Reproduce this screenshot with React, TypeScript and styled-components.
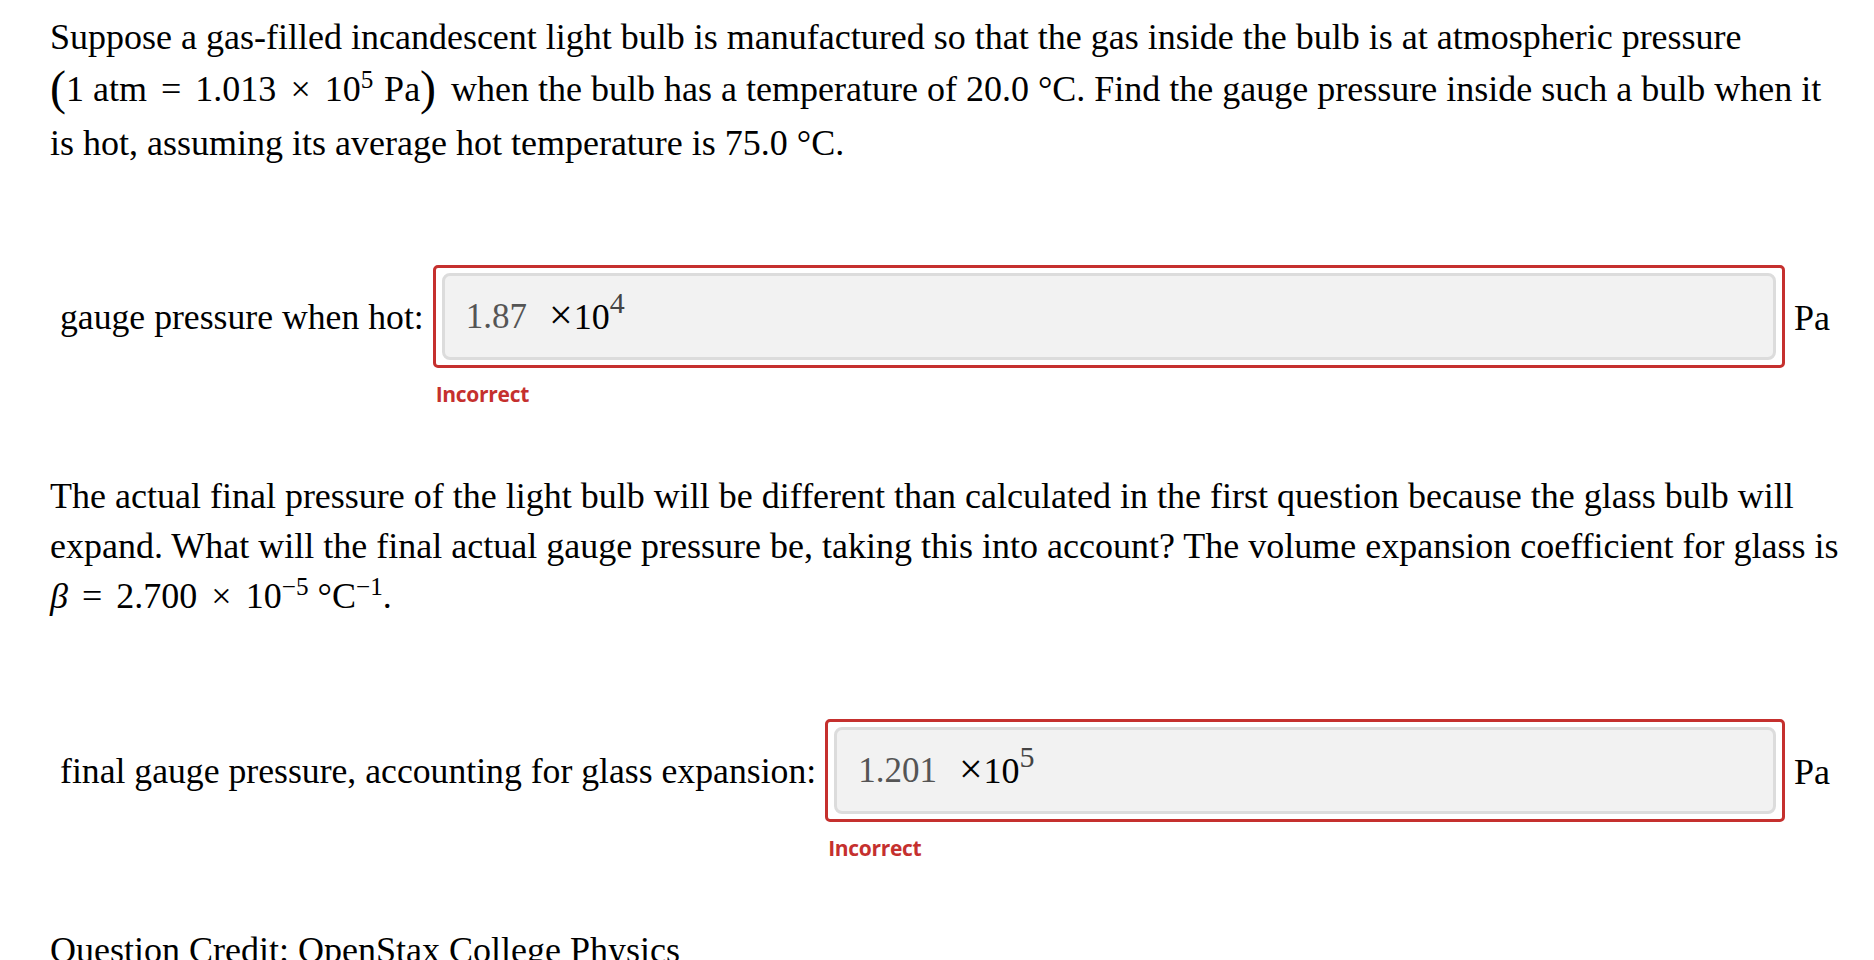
import React from "react";
import styled, { createGlobalStyle } from "styled-components";

const GlobalStyle = createGlobalStyle`
  html, body { margin: 0; padding: 0; background: #ffffff; }
  body {
    font-family: "Liberation Serif", "Times New Roman", serif;
    color: #000000;
  }
`;

const Page = styled.main`
  box-sizing: border-box;
  height: 960px;
  overflow: hidden;
  padding: 12px 30px 0 50px;
  font-size: 36px;
  line-height: 50px;
`;

const Para = styled.p<{ $top?: number }>`
  margin: ${(p) => p.$top ?? 0}px 0 0;
`;

const MathRun = styled.span<{ $after?: number }>`
  white-space: nowrap;
  margin-right: ${(p) => p.$after ?? 0}px;
`;

const MathText = styled.span``;

const Op = styled.span`
  margin: 0 0.39em;
`;

const MathUnit = styled.span`
  margin-left: 0.3em;
`;

const BigParen = styled.span`
  display: inline-block;
  font-size: 48px;
  line-height: 48px;
  vertical-align: -3px;
  padding: 2px 0 6px;
`;

const Sup = styled.sup`
  font-size: 0.7em;
  line-height: 0;
  vertical-align: 0.5em;
`;

const Ital = styled.i`
  font-style: italic;
`;

const QuestionGrid = styled.div<{ $top: number }>`
  display: grid;
  grid-template-columns: auto 1fr auto;
  column-gap: 9px;
  row-gap: 12px;
  margin-top: ${(p) => p.$top}px;
  padding: 0 14px 0 10px;
`;

const Label = styled.label`
  align-self: center;
  white-space: nowrap;
  font-size: 35.7px;
`;

const Frame = styled.div`
  box-sizing: border-box;
  height: 103px;
  border: 3px solid #c5302e;
  border-radius: 5px;
  padding: 5px 6px;
`;

const Field = styled.div`
  box-sizing: border-box;
  height: 100%;
  display: flex;
  align-items: center;
  padding-left: 21px;
  background: #f2f2f2;
  border: 3px solid #dcdcdc;
  border-radius: 8px;
`;

const Value = styled.span`
  font-size: 35px;
  color: #555555;
`;

const Times = styled.span`
  margin-left: 22px;
  color: #000000;
`;

const Cross = styled.span`
  font-size: 42px;
  line-height: 0;
  margin-right: 1px;
`;

const Exp = styled.span`
  display: inline-block;
  font-size: 30px;
  line-height: 0;
  vertical-align: 16px;
  color: #444444;
`;

const Unit = styled.span`
  align-self: center;
  padding-top: 2px;
`;

const Feedback = styled.div`
  grid-column: 2;
  padding-left: 3px;
  font-family: "Open Sans", "Liberation Sans", sans-serif;
  font-weight: 700;
  font-size: 21px;
  letter-spacing: -0.3px;
  line-height: 28px;
  color: #c5302e;
`;

type Q = { label: string; value: string; exp: string; top: number };

const Question: React.FC<Q> = ({ label, value, exp, top }) => (
  <QuestionGrid $top={top}>
    <Label>{label}</Label>
    <Frame>
      <Field>
        <Value>{value}</Value>
        <Times>
          <Cross>×</Cross>10<Exp>{exp}</Exp>
        </Times>
      </Field>
    </Frame>
    <Unit>Pa</Unit>
    <Feedback>Incorrect</Feedback>
  </QuestionGrid>
);

export default function App() {
  return (
    <>
      <GlobalStyle />
      <Page>
        <Para>
          Suppose a gas-filled incandescent light bulb is manufactured so that the gas
          inside the bulb is at atmospheric pressure{" "}
          <MathRun $after={6}>
            <BigParen>(</BigParen>
            <MathText>1 atm</MathText>
            <Op>=</Op>
            <MathText>1.013</MathText>
            <Op>×</Op>
            <MathText>10</MathText>
            <Sup>5</Sup>
            <MathUnit>Pa</MathUnit>
            <BigParen>)</BigParen>
          </MathRun>{" "}
          when the bulb has a temperature of 20.0 °C. Find the gauge pressure inside such a
          bulb when it is hot, assuming its average hot temperature is 75.0 °C.
        </Para>
        <Question label="gauge pressure when hot:" value="1.87" exp="4" top={97} />
        <Para $top={63}>
          The actual final pressure of the light bulb will be different than calculated in
          the first question because the glass bulb will expand. What will the final actual
          gauge pressure be, taking this into account? The volume expansion coefficient for
          glass is{" "}
          <MathRun>
            <Ital>β</Ital>
            <Op>=</Op>
            <MathText>2.700</MathText>
            <Op>×</Op>
            <MathText>10</MathText>
            <Sup>−5</Sup>
            <MathText> °C</MathText>
            <Sup>−1</Sup>
          </MathRun>
          .
        </Para>
        <Question
          label="final gauge pressure, accounting for glass expansion:"
          value="1.201"
          exp="5"
          top={98}
        />
        <Para $top={63}>Question Credit: OpenStax College Physics</Para>
      </Page>
    </>
  );
}
